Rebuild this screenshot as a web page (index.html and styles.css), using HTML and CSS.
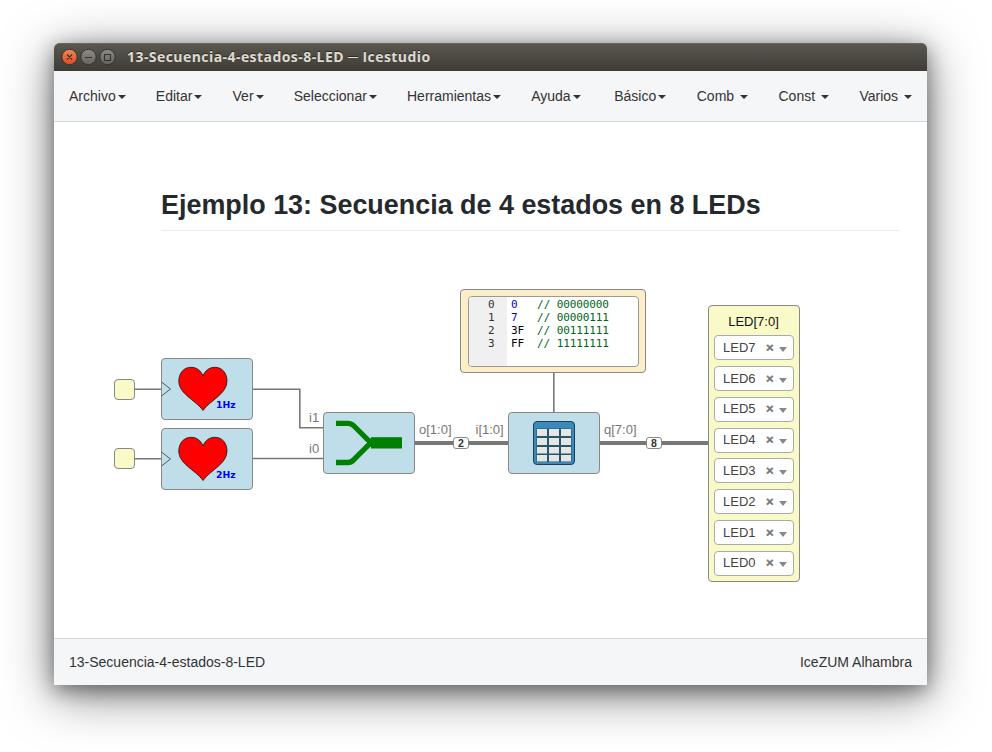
FILE: index.html
```html
<!DOCTYPE html>
<html lang="es">
<head>
<meta charset="utf-8">
<title>13-Secuencia-4-estados-8-LED ─ Icestudio</title>
<link rel="stylesheet" href="styles.css">
</head>
<body>
<div class="window">
  <header class="titlebar">
    <svg class="controls" width="56" height="18" viewBox="0 0 56 18">
      <defs>
        <linearGradient id="close" x1="0" y1="0" x2="0" y2="1"><stop offset="0" stop-color="#f4845b"/><stop offset="1" stop-color="#df4b1c"/></linearGradient>
        <linearGradient id="ctl" x1="0" y1="0" x2="0" y2="1"><stop offset="0" stop-color="#8d8b84"/><stop offset="1" stop-color="#65635c"/></linearGradient>
      </defs>
      <g stroke="#35332e" stroke-width="1">
        <circle cx="8.5" cy="9" r="7.7" fill="url(#close)"/>
        <circle cx="27.5" cy="9" r="7.7" fill="url(#ctl)"/>
        <circle cx="46.5" cy="9" r="7.7" fill="url(#ctl)"/>
        <path d="M6 6.5l5 5M11 6.5l-5 5M24 9.5h7M43.5 6.5h6v6h-6z" fill="none" stroke-width="1.1"/>
      </g>
    </svg>
    <h1 class="title">13-Secuencia-4-estados-8-LED ─ Icestudio</h1>
  </header>
  <nav class="menu">
    <ul class="menu-group">
      <li>Archivo<i class="caret"></i></li>
      <li>Editar<i class="caret"></i></li>
      <li>Ver<i class="caret"></i></li>
      <li>Seleccionar<i class="caret"></i></li>
      <li>Herramientas<i class="caret"></i></li>
      <li>Ayuda<i class="caret"></i></li>
    </ul>
    <ul class="menu-group">
      <li>Básico<i class="caret"></i></li>
      <li>Comb <i class="caret"></i></li>
      <li>Const <i class="caret"></i></li>
      <li>Varios <i class="caret"></i></li>
    </ul>
  </nav>
  <main class="canvas">
    <h2 class="heading">Ejemplo 13: Secuencia de 4 estados en 8 LEDs</h2>

    <svg class="wires" viewBox="54 122 873 516">
      <g fill="none" stroke="#777" stroke-width="1.6">
        <path d="M135 389.2H161M135 458.7H161"/>
        <path d="M253 389.2H299.8V427.7H323M253 458.5H323"/>
        <path d="M553.8 373V412"/>
        <path d="M415 443H508M600 443H708" stroke-width="4"/>
      </g>
    </svg>

    <div class="block input input-a"></div>
    <div class="block input input-b"></div>

    <div class="block logic heart-a">
      <svg viewBox="161 358 92 62">
        <path d="M161.500 382l9 7-9 7" fill="none" stroke="#555"/>
        <path d="M203 376C201 370.500 196.500 367.300 191 367.300C184 367.300 178.800 373 178.800 381C178.800 394 195 399.500 203 410.500C211 399.500 227 394 227 381C227 373 222 367.300 215 367.300C209.500 367.300 205 370.500 203 376Z" fill="red" stroke="#222" stroke-width=".9"/>
        <text x="216" y="408" class="rate">1Hz</text>
      </svg>
    </div>
    <div class="block logic heart-b">
      <svg viewBox="161 358 92 62">
        <path d="M161.500 382l9 7-9 7" fill="none" stroke="#555"/>
        <path d="M203 376C201 370.500 196.500 367.300 191 367.300C184 367.300 178.800 373 178.800 381C178.800 394 195 399.500 203 410.500C211 399.500 227 394 227 381C227 373 222 367.300 215 367.300C209.500 367.300 205 370.500 203 376Z" fill="red" stroke="#222" stroke-width=".9"/>
        <text x="216" y="408" class="rate">2Hz</text>
      </svg>
    </div>

    <div class="block logic join">
      <svg viewBox="323 412 92 62">
        <path d="M336 423.300H348Q351.500 423.300 354 426L366 438Q370 442.700 376 442.700M336 462.500H348Q351.500 462.500 354 459.500L366 447.500Q370 442.700 376 442.700" fill="none" stroke="green" stroke-width="5.300"/>
        <path d="M371 437.200H402V448.500H371Z" fill="green"/>
      </svg>
    </div>

    <div class="block logic table">
      <svg viewBox="508 412 92 62">
        <rect x="533.500" y="421.500" width="41" height="43" rx="3.500" fill="#3a8aba" stroke="#1d3f55"/>
        <rect x="536.500" y="428.500" width="35" height="33.500" fill="#27566f"/>
        <path d="M537 429h10v7h-10zM549 429h10v7h-10zM561 429h10v7h-10zM537 438h10v7h-10zM549 438h10v7h-10zM561 438h10v7h-10zM537 447h10v6.500h-10zM549 447h10v6.500h-10zM561 447h10v6.500h-10zM537 455h10v6.500h-10zM549 455h10v6.500h-10zM561 455h10v6.500h-10z" fill="#e6e6e6"/>
      </svg>
    </div>

    <span class="port i1">i1</span>
    <span class="port i0">i0</span>
    <span class="port o">o[1:0]</span>
    <span class="port i">i[1:0]</span>
    <span class="port q">q[7:0]</span>
    <b class="bus bus-a">2</b>
    <b class="bus bus-b">8</b>

    <section class="block memory">
      <div class="editor">
        <pre class="gutter">0
1
2
3</pre>
        <pre class="code"><span class="num">0</span>   <span class="rem">// 00000000</span>
<span class="num">7</span>   <span class="rem">// 00000111</span>
3F  <span class="rem">// 00111111</span>
FF  <span class="rem">// 11111111</span></pre>
      </div>
    </section>

    <section class="block output">
      <h3 class="output-name">LED[7:0]</h3>
      <div class="select">LED7<span class="clear">×</span><i class="arrow"></i></div>
      <div class="select">LED6<span class="clear">×</span><i class="arrow"></i></div>
      <div class="select">LED5<span class="clear">×</span><i class="arrow"></i></div>
      <div class="select">LED4<span class="clear">×</span><i class="arrow"></i></div>
      <div class="select">LED3<span class="clear">×</span><i class="arrow"></i></div>
      <div class="select">LED2<span class="clear">×</span><i class="arrow"></i></div>
      <div class="select">LED1<span class="clear">×</span><i class="arrow"></i></div>
      <div class="select">LED0<span class="clear">×</span><i class="arrow"></i></div>
    </section>
  </main>
  <footer class="status"><span>13-Secuencia-4-estados-8-LED</span><span>IceZUM Alhambra</span></footer>
</div>
</body>
</html>
```

FILE: styles.css
```css
* { box-sizing: border-box; }
body {
  margin: 0;
  height: 752px;
  padding: 43px 65px 0 54px;
  overflow: hidden;
  background: #fff;
  font: 14px/20px "Liberation Sans", Arial, sans-serif;
  color: #333;
}
.window {
  display: flex;
  flex-direction: column;
  height: 642px;
  border-radius: 6px 6px 0 0;
  background: #fff;
  box-shadow: 0 10px 50px rgba(0, 0, 0, .5), 0 5px 20px rgba(0, 0, 0, .4);
}
.titlebar {
  display: flex;
  align-items: center;
  height: 28px;
  padding-left: 7px;
  border-radius: 6px 6px 0 0;
  background: linear-gradient(#5b584f, #3d3c37);
  box-shadow: inset 0 1px #69665d;
}
.title {
  margin: 0 0 0 10px;
  font: bold 14px/28px "Open Sans", "Noto Sans", sans-serif;
  letter-spacing: .44px;
  color: #dfdbd2;
  text-shadow: 0 -1px #2b2a26;
  white-space: nowrap;
}
.menu {
  display: flex;
  justify-content: space-between;
  align-items: center;
  height: 51px;
  padding: 0 15px;
  border-bottom: 1px solid #d3d8d8;
  background: #f5f6f8;
}
.menu-group {
  display: flex;
  gap: 30.15px;
  margin: 0;
  padding: 0;
  list-style: none;
}
.menu-group + .menu-group { gap: 30.5px; }
.menu-group li { white-space: pre; }
.caret {
  display: inline-block;
  margin-left: 2px;
  border: 4px solid transparent;
  border-top-color: #333;
  border-bottom: 0;
  vertical-align: middle;
}
.canvas {
  position: relative;
  flex: 1;
}
.heading {
  margin: 60px 27px 0 107px;
  height: 49px;
  border-bottom: 1px solid #eaecef;
  font-size: 26.92px;
  line-height: 46px;
  color: #24292e;
  white-space: nowrap;
}
.wires {
  position: absolute;
  left: 0;
  top: 0;
  width: 873px;
  height: 516px;
}
.block {
  position: absolute;
  border: 1px solid #888;
  border-radius: 4px;
}
.input { left: 60px; width: 21px; height: 21px; background: #fafac8; }
.input-a { top: 257px; }
.input-b { top: 326px; }
.logic { width: 92px; height: 62px; background: #c0deea; }
.logic svg { display: block; width: 92px; height: 62px; margin: -1px; }
.heart-a { left: 107px; top: 236px; }
.heart-b { left: 107px; top: 306px; }
.join { left: 269px; top: 290px; }
.table { left: 454px; top: 290px; }
.rate { font: bold 9.300px "DejaVu Sans", sans-serif; fill: #00f; }
.port { position: absolute; font-size: 13px; line-height: 16px; color: #777; }
.i1 { left: 255px; top: 288px; }
.i0 { left: 255px; top: 319px; }
.o { left: 365px; top: 300px; }
.i { left: 421.500px; top: 300px; }
.q { left: 550px; top: 300px; }
.bus {
  position: absolute;
  top: 315px;
  width: 16px;
  height: 12px;
  border: 1px solid #888;
  border-radius: 3px;
  background: #fff;
  font-size: 10.500px;
  line-height: 10px;
  text-align: center;
}
.bus-a { left: 399px; }
.bus-b { left: 592px; }
.memory {
  left: 406px;
  top: 167px;
  width: 186px;
  height: 84px;
  padding: 6px 6px 6px 7px;
  background: #fdeeca;
}
.editor {
  display: flex;
  height: 71px;
  border: 1px solid #999;
  border-radius: 4px;
  overflow: hidden;
  background: #fff;
}
.editor pre {
  margin: 0;
  padding-top: 1px;
  font: 11px/13px "DejaVu Sans Mono", monospace;
  letter-spacing: -.1px;
}
.editor .gutter {
  width: 38px;
  padding-right: 12.5px;
  background: #f0f0f0;
  text-align: right;
}
.editor .code { padding-left: 4px; color: #000; }
.num { color: #0000cd; }
.rem { color: #00661a; }
.output {
  left: 654px;
  top: 183px;
  width: 92px;
  height: 277px;
  padding: 6px 5px 0;
  display: flex;
  flex-direction: column;
  gap: 5.800px;
  background: #fafac8;
}
.output-name {
  margin: 0 1px -2.500px 0;
  font-weight: normal;
  font-size: 13px;
  line-height: 20px;
  color: #111;
  text-align: center;
}
.select {
  display: flex;
  align-items: center;
  height: 25px;
  padding: 0 6px 0 8px;
  border: 1px solid #aaa;
  border-radius: 4px;
  background: #fff;
  font-size: 13px;
  color: #444;
}
.clear {
  margin-left: auto;
  font-weight: bold;
  color: #777;
  -webkit-text-stroke: .4px #777;
}
.arrow {
  margin: 3px 0 0 5.5px;
  border: 4px solid transparent;
  border-top: 5px solid #888;
  border-bottom: 0;
}
.status {
  display: flex;
  justify-content: space-between;
  height: 47px;
  padding: 0 15px;
  border-top: 1px solid #d3d5d8;
  background: #f5f6f8;
  line-height: 46px;
}
```
